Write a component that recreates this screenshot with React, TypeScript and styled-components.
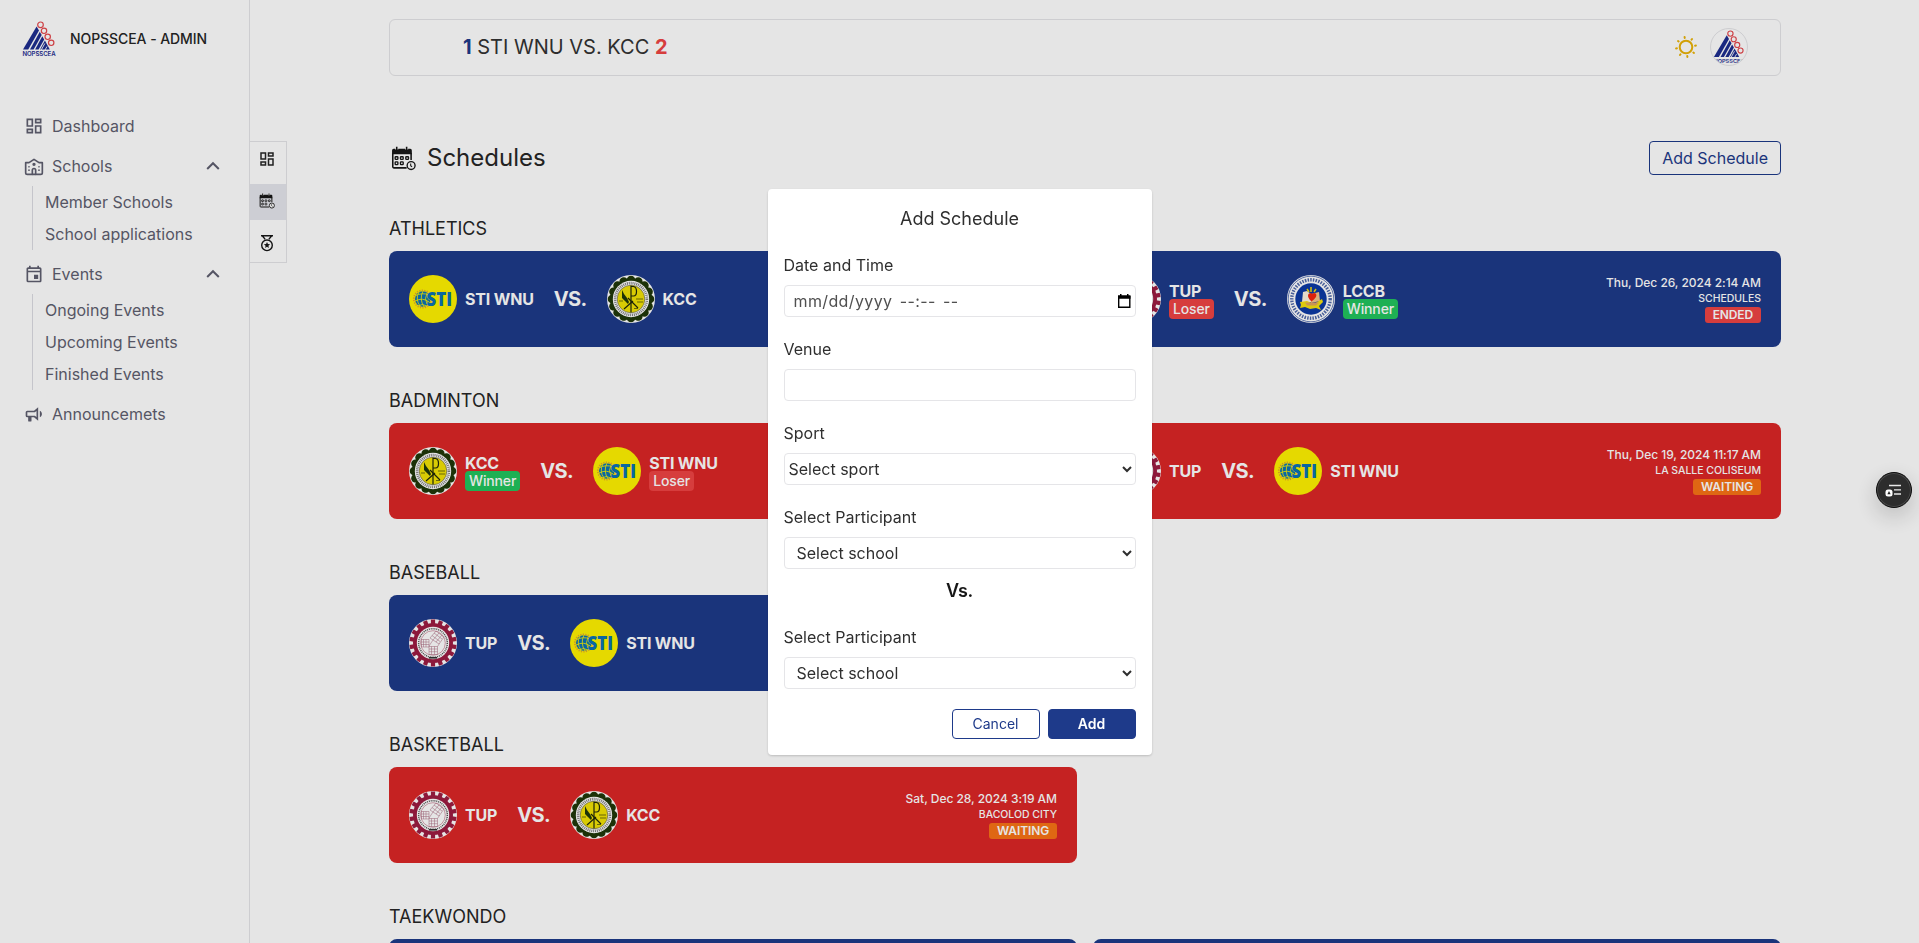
import React from "react";
import styled, { createGlobalStyle } from "styled-components";
import { MdOutlineDashboard, MdOutlineEvent } from "react-icons/md";

const GlobalStyle = createGlobalStyle`
  *, *::before, *::after { box-sizing: border-box; }
  body {
    margin: 0;
    overflow: hidden;
    background: #fff;
    color: #262626;
    font-family: Inter, "Liberation Sans", sans-serif;
    font-size: 16px;
    line-height: 24px;
    font-weight: 400;
  }
  button, input, select { font: inherit; letter-spacing: inherit; color: inherit; }
`;

const colors = {
  blue: "#1e3a8a",
  red: "#dc2626",
  line: "#e5e5e8",
  muted: "#5f5f70",
};

const Page = styled.div`
  display: flex;
  height: 943px;
  overflow: hidden;
`;

/* ---------- sidebar ---------- */

const Sidebar = styled.aside`
  flex: none;
  width: 250px;
  border-right: 1px solid ${colors.line};
  display: flex;
  flex-direction: column;
`;

const Brand = styled.div`
  display: flex;
  align-items: center;
  gap: 13px;
  height: 78px;
  margin-bottom: 28px;
  padding-left: 21px;
  font-size: 14px;
  font-weight: 500;
  letter-spacing: -0.07px;
`;

const NavRow = styled.div`
  display: flex;
  align-items: center;
  height: 40px;
  padding: 0 29px 0 24px;
  gap: 8px;
  color: ${colors.muted};

  svg { flex: none; }
`;

const NavLabel = styled.span`
  flex: 1;
`;

const NavGroup = styled.div`
  margin-bottom: 4px;
`;

const SubNav = styled.div`
  margin-left: 32px;
  padding-left: 12px;
  border-left: 1px solid #dcdce2;
`;

const SubItem = styled.div`
  height: 32px;
  line-height: 32px;
  color: ${colors.muted};
`;

/* ---------- rail ---------- */

const Rail = styled.nav`
  flex: none;
  align-self: flex-start;
  width: 37px;
  height: 122px;
  margin-top: 141px;
  border: 1px solid ${colors.line};
  border-left: 0;
  display: flex;
  flex-direction: column;
  justify-content: space-between;
`;

const RailItem = styled.div<{ $active?: boolean }>`
  height: 36px;
  display: flex;
  align-items: center;
  justify-content: center;
  padding: 0 2px 2px 0;
  background: ${(p) => (p.$active ? "#e5e6ec" : "transparent")};
`;

/* ---------- content ---------- */

const Main = styled.main`
  width: 1392px;
  margin-left: 102px;
  padding-top: 19px;
`;

const TopBar = styled.header`
  display: flex;
  align-items: center;
  height: 57px;
  padding: 0 32px 1px 73px;
  border: 1px solid ${colors.line};
  border-radius: 6px;
`;

const Score = styled.div`
  flex: 1;
  font-size: 20px;
  line-height: 28px;
  color: #333;
`;

const Points = styled.b<{ $tone: string }>`
  font-weight: 700;
  color: ${(p) => p.$tone};
`;

const Avatar = styled.div`
  display: flex;
  align-items: center;
  justify-content: center;
  width: 38px;
  height: 38px;
  margin-left: 12px;
  border: 1px solid ${colors.line};
  border-radius: 50%;
  overflow: hidden;

  svg { flex: none; }
`;

const TitleRow = styled.div`
  display: flex;
  align-items: center;
  height: 34px;
  margin: 65px 0 40px;
  padding-left: 2px;
`;

const Title = styled.h1`
  flex: 1;
  margin: 0 0 0 11px;
  font-size: 24px;
  line-height: 32px;
  font-weight: 400;
`;

const AddButton = styled.button`
  height: 34px;
  padding: 0 12px;
  border: 1px solid ${colors.blue};
  border-radius: 4px;
  background: transparent;
  color: ${colors.blue};
`;

const Section = styled.section`
  margin-bottom: 40px;
`;

const SectionTitle = styled.h2`
  margin: 0 0 8px;
  font-size: 18px;
  line-height: 28px;
  font-weight: 400;
`;

const Cards = styled.div`
  display: grid;
  grid-template-columns: 1fr 1fr;
  gap: 16px;
`;

const Card = styled.article<{ $color: string }>`
  display: flex;
  align-items: center;
  justify-content: space-between;
  height: 96px;
  padding: 0 20px;
  border-radius: 8px;
  background: ${(p) => p.$color};
  color: #fff;
`;

const Match = styled.div`
  display: flex;
  align-items: center;
  gap: 20px;
`;

const Versus = styled.span`
  font-size: 20px;
  line-height: 28px;
  font-weight: 700;
  letter-spacing: -0.6px;
`;

const TeamBox = styled.div`
  display: flex;
  align-items: center;
  gap: 8px;

  svg { flex: none; }
`;

const TeamText = styled.div`
  display: flex;
  flex-direction: column;
  align-items: flex-start;
  font-size: 16px;
  line-height: 24px;
  font-weight: 700;
  letter-spacing: -0.18px;
`;

const Outcome = styled.span<{ $win: boolean }>`
  height: 20px;
  margin-top: -4px;
  padding: 0 4px;
  border-radius: 4px;
  font-size: 14px;
  line-height: 20px;
  font-weight: 500;
  letter-spacing: -0.14px;
  background: ${(p) => (p.$win ? "#22c55e" : "#ef4444")};
`;

const Details = styled.div`
  display: flex;
  flex-direction: column;
  align-items: flex-end;
  font-size: 12px;
  line-height: 16px;
  font-weight: 500;
  letter-spacing: -0.04px;
`;

const Place = styled.span`
  font-size: 10.5px;
  line-height: 16px;
`;

const Status = styled.span<{ $ended: boolean }>`
  height: 16px;
  padding: 0 8px;
  border-radius: 3px;
  font-weight: 600;
  letter-spacing: -0.12px;
  background: ${(p) => (p.$ended ? "#ef4444" : "#f97316")};
`;

/* ---------- dialog ---------- */

const Backdrop = styled.div`
  position: fixed;
  inset: 0;
  display: flex;
  align-items: center;
  justify-content: center;
  background: rgba(0, 0, 0, 0.1);
`;

const Dialog = styled.form`
  display: flex;
  flex-direction: column;
  gap: 20px;
  width: 384px;
  height: 566px;
  margin-bottom: -1px;
  padding: 16px;
  border-radius: 4px;
  background: #fff;
  color: #2f2f2f;
  box-shadow: 0 1px 3px rgba(0, 0, 0, 0.12), 0 1px 2px rgba(0, 0, 0, 0.08);
`;

const DialogTitle = styled.h3`
  margin: 0;
  text-align: center;
  font-size: 18px;
  line-height: 28px;
  font-weight: 400;
`;

const Field = styled.label`
  display: flex;
  flex-direction: column;
  gap: 8px;
`;

const Input = styled.input`
  width: 100%;
  height: 32px;
  padding: 0 8px;
  border: 1px solid ${colors.line};
  border-radius: 4px;
  background: #fff;
  outline: none;
`;

const DateBox = styled.div`
  display: flex;
  align-items: center;
  height: 32px;
  padding: 0 4px 0 9px;
  border: 1px solid ${colors.line};
  border-radius: 4px;
`;

const DateInput = styled.input`
  flex: 1;
  min-width: 0;
  padding: 0;
  border: 0;
  outline: none;
  background: transparent;
  letter-spacing: 0.38px;
  word-spacing: 2.4px;

  &::placeholder { color: #505050; opacity: 1; }
`;

const Select = styled.select<{ $inset: number }>`
  width: 100%;
  height: 32px;
  padding: 0 0 0 ${(p) => p.$inset}px;
  border: 1px solid ${colors.line};
  border-radius: 4px;
  background: #fff;
  outline: none;
`;

const Between = styled.div`
  margin-top: -12px;
  text-align: center;
  font-size: 18px;
  line-height: 28px;
  font-weight: 600;
  letter-spacing: -0.3px;
  color: #171717;
`;

const Actions = styled.div`
  display: flex;
  justify-content: flex-end;
  gap: 8px;
`;

const ActionButton = styled.button<{ $primary?: boolean }>`
  width: 88px;
  height: 30px;
  padding: 0;
  border: 1px solid ${colors.blue};
  border-radius: 4px;
  font-size: 14px;
  line-height: 20px;
  background: ${(p) => (p.$primary ? colors.blue : "#fff")};
  color: ${(p) => (p.$primary ? "#fff" : colors.blue)};
  font-weight: ${(p) => (p.$primary ? 600 : 400)};
`;

const FloatingButton = styled.div`
  position: fixed;
  right: 7px;
  top: 472px;
  width: 36px;
  height: 36px;
  border-radius: 50%;
  border: 1px solid #0c0c0c;
  background: #2d2d2d;
  box-shadow: inset 0 0 0 1px #4a4a4a, 0 8px 24px rgba(0, 0, 0, 0.2);
`;

/* ---------- drawings ---------- */

const SchoolIcon = () => (
  <svg width="20" height="20" viewBox="0 0 24 24" fill="none" stroke="currentColor" strokeWidth="2" strokeLinecap="round" strokeLinejoin="round">
    <circle cx="12" cy="10" r="1" />
    <path d="M22 20V8h-4l-6-4-6 4H2v12a2 2 0 0 0 2 2h16a2 2 0 0 0 2-2Z" />
    <path d="M6 17v.01M6 13v.01M18 17v.01M18 13v.01M14 22v-5a2 2 0 0 0-4 0v5" />
  </svg>
);

const HornIcon = () => (
  <svg width="20" height="20" viewBox="0 0 24 24" fill="currentColor">
    <path d="M12 8H4a2 2 0 0 0-2 2v4a2 2 0 0 0 2 2h1v4a1 1 0 0 0 1 1h2a1 1 0 0 0 1-1v-4h3l5 4V4l-5 4m3 7.6L13 14H4v-4h9l2-1.6v7.2m6.500-3.600c0 1.710-.960 3.260-2.500 4V8c1.530.750 2.500 2.300 2.500 4Z" />
  </svg>
);

const ChevronUp = () => (
  <svg width="14" height="10" viewBox="0 0 14 10" fill="none" stroke="currentColor" strokeWidth="2">
    <path d="M1.200 8 7 2.200 12.800 8" />
  </svg>
);

const CalendarIcon = () => (
  <svg width="13" height="15" viewBox="0 0 13 15" fill="none" stroke="#000">
    <path d="M.7 2v11.300h11.100V2" strokeWidth="1.400" />
    <path d="M0 1.300h12.500v3.400H0ZM2 0h1.500v2H2ZM9 0h1.500v2H9Z" fill="#000" stroke="none" />
  </svg>
);

const ScheduleIcon = ({ size }: { size: number }) => (
  <svg width={size} height={size} viewBox="0 0 24 24" fill="none" stroke="#171717">
    <path d="M1.700 6.500V20a1 1 0 0 0 1 1H15M19.300 6.500V13.500" strokeWidth="1.500" />
    <path d="M1 8V4.200A1.500 1.500 0 0 1 2.500 2.700h16A1.500 1.500 0 0 1 20 4.200V8Z" fill="#171717" stroke="none" />
    <path d="M5.500.8v2.600M15 .8v2.600" stroke="#fff" strokeWidth="3" />
    <path d="M5.500.7v3.300M15 .7v3.300" strokeWidth="1.500" />
    <g strokeWidth="1.300">
      <rect x="4" y="10.300" width="2.600" height="2.600" rx=".6" />
      <rect x="9.100" y="10.300" width="2.600" height="2.600" rx=".6" />
      <rect x="14.200" y="10.300" width="2.600" height="2.600" rx=".6" />
      <rect x="4" y="15.300" width="2.600" height="2.600" rx=".6" />
      <rect x="9.100" y="15.300" width="2.600" height="2.600" rx=".6" />
    </g>
    <circle cx="19.300" cy="18.800" r="3.800" fill="#fff" strokeWidth="1.300" />
    <path d="M18.900 16.800v2.100l1.300 1.200" strokeWidth="1" />
  </svg>
);

const MedalIcon = () => (
  <svg width="16" height="18" viewBox="0 0 16 18" fill="none" stroke="#171717" strokeWidth="1.400">
    <path d="M2 1.800h12M3.500 2l2.700 3.400M12.500 2 9.800 5.400" />
    <circle cx="8" cy="11.300" r="5.300" />
    <path d="m8 8.100.9 2 2.200.2-1.700 1.500.5 2.200L8 12.800l-1.900 1.200.5-2.200-1.700-1.500 2.200-.2Z" fill="#171717" stroke="none" />
  </svg>
);

const SunIcon = () => (
  <svg width="24" height="24" viewBox="-12 -12 24 24" fill="none" stroke="#eab308" strokeWidth="2" strokeLinecap="round">
    <circle r="6.300" />
    {[0, 45, 90, 135, 180, 225, 270, 315].map((a) => (
      <path key={a} d="M0-9.200V-10" transform={`rotate(${a - 8})`} />
    ))}
  </svg>
);

const LeagueLogo = ({ size }: { size: number }) => (
  <svg width={size} height={size} viewBox="0 0 36 36">
    <g fill="#1e2d8f">
      <path d="M15.600 5.500 18 9.500 7.200 28.500H2Z" />
      <path d="m18.800 10.800 1.900 3.300L12.600 28.500H9Z" />
      <path d="m21.300 15.300 1.900 3.200-5.600 10h-3.500Z" />
      <path d="m23.900 19.600 4.900 8.900h-9.700Z" />
    </g>
    <path d="m23.800 22.500-3.600 6.500M26 25.500l-2 3.500" stroke="#fff" strokeWidth=".9" />
    <g fill="none" stroke="#e5484d" strokeWidth="1.200">
      <circle cx="19.500" cy="3.800" r="2.800" />
      <circle cx="23" cy="9.800" r="2.700" />
      <circle cx="26.700" cy="15.800" r="2.700" />
      <circle cx="30.200" cy="21.800" r="2.700" />
    </g>
    <text x="18" y="34.600" textAnchor="middle" textLength="33" lengthAdjust="spacingAndGlyphs" fontSize="5.800" fontWeight="600" fill="#1e2d8f">
      NOPSSCEA
    </text>
  </svg>
);

const StiLogo = () => (
  <svg width="48" height="48" viewBox="0 0 48 48">
    <circle cx="24" cy="24" r="24" fill="#fff200" />
    <circle cx="13.800" cy="24" r="7.800" fill="#0b72b5" />
    <g fill="none" stroke="#fff200" strokeWidth=".8">
      <path d="M6 21q7-4 14-1M6 26q8-4 14 1M9 31q4-3 9 0M10 17q-4 7 1 14M14 16q-4 8 1 16M18 18q-3 6 0 11" />
    </g>
    <circle cx="13.500" cy="24" r="8.700" fill="none" stroke="#d9923a" strokeWidth="1.700" strokeDasharray="1.200 1.300" opacity=".8" />
    <text x="17.500" y="31" textLength="25.500" lengthAdjust="spacingAndGlyphs" fontFamily="Open Sans" fontSize="18.500" fontWeight="800" fill="#0b72b5" stroke="#fff200" strokeWidth=".8" paintOrder="stroke">
      STI
    </text>
  </svg>
);

const petals = Array.from({ length: 16 }, (_, i) => i * 22.5);

const KccLogo = () => (
  <svg width="48" height="48" viewBox="-24 -24 48 48">
    <circle r="24" fill="#fff" />
    <g fill="#20380a">
      {petals.map((a) => (
        <circle key={a} cy="-19" r="4.300" transform={`rotate(${a})`} />
      ))}
      <circle r="20.500" />
    </g>
    <circle r="18.200" fill="#fff" />
    <circle r="15.900" fill="none" stroke="#555" strokeWidth="2.600" strokeDasharray="1 .9" opacity=".75" />
    <circle r="13.800" fill="#f2e205" stroke="#555" strokeWidth=".6" />
    <g fill="none" stroke="#20280a" strokeWidth="1.200">
      <path d="M0-13.500V13.500M0-12.500h2.500q3 .5 3 5t-3 4.500H0" />
      <path d="m-7 10 9-8M-3-1 7 9" />
      <path d="M5 0h7M6 3h6M3 9.500h4M-12 2h4" strokeWidth=".6" />
    </g>
    <path d="m-9-9 2 4 3 4 2 4-1 2-3-3-3-3Z" fill="#20380a" />
  </svg>
);

const teeth = Array.from({ length: 18 }, (_, i) => i * 20);

const TupLogo = () => (
  <svg width="48" height="48" viewBox="-24 -24 48 48">
    <circle r="24" fill="#fff" />
    <circle r="20" fill="#9d1c42" />
    <g fill="#9d1c42">
      {teeth.map((a) => (
        <rect key={a} x="-2.100" y="-23.500" width="4.200" height="6" transform={`rotate(${a})`} />
      ))}
    </g>
    <circle r="16.200" fill="#fff" />
    <circle r="14.300" fill="none" stroke="#333" strokeWidth="1.500" strokeDasharray="1 .9" opacity=".85" />
    <circle r="12.300" fill="#fff" stroke="#b04a66" strokeWidth=".5" />
    <g fill="none" stroke="#a8687f" strokeWidth=".5">
      <path d="M-12-3.500H-4V4h-7.500ZM-12-1h8M-12 1.500h8M-9.500-3.500V4M-7-3.500V4" />
      <path d="M-4 3.500h8.500v8H-4ZM-4 6h8.500M-4 8.700h8.500M-1.500 3.500v8M1.500 3.500v8" />
      <path d="m-3-5 6-7 8 6-5 7ZM-1-7.500l8 6M1-10l8 6M0-3l6-7M3-1l6-7M-4 3l4-6M4.500 3.500l2-3" />
    </g>
    <path d="M-4 14.800h8" stroke="#333" strokeWidth="1.600" />
  </svg>
);

const LccbLogo = () => (
  <svg width="48" height="48" viewBox="-24 -24 48 48">
    <circle r="24" fill="#fff" />
    <circle r="22.800" fill="none" stroke="#2a4a9e" strokeWidth=".7" />
    <circle r="19.200" fill="none" stroke="#33509c" strokeWidth="3.400" strokeDasharray="1.500 1.200" opacity=".85" />
    <circle r="15.700" fill="#0d3aa5" />
    <path d="M-8-7-4-8 0-5v8h-9Z" fill="#fff4e0" />
    <path d="M0-5 8-7l1 9-9 2Z" fill="#f2c48a" />
    <path d="M0-12v5M-4-10l2 3M5-10 3-7" stroke="#f4d90f" strokeWidth="1.500" />
    <path d="m-11 3 7-1 7 3 8-5 1 3-4 4 2 4-5-2-6 1-5-2-5 1 1-3Z" fill="#f4e00f" />
    <path d="M-6 3.500h14l-3 3h-9Z" fill="#e0a45e" />
    <path d="M.5 2.500C-3-1-3.500-3-2.500-5 0-7 1-5 1-5s3-2 4 0 0 4-4.500 7.500Z" fill="#f4260f" />
  </svg>
);

const PanelGlyph = () => (
  <svg width="34" height="34" viewBox="0 0 34 34" fill="none">
    <path d="M12 12.500h12M17 16.800h7M17 21h7" stroke="#e8e8e8" strokeWidth="1.300" />
    <rect x="8.500" y="16.500" width="7" height="7" rx="2.500" fill="#fff" />
    <path d="m12 18 1.600 3.300h-3.200Z" fill="#222" />
  </svg>
);

/* ---------- data ---------- */

const logos = { "STI WNU": StiLogo, KCC: KccLogo, TUP: TupLogo, LCCB: LccbLogo };

type TeamName = keyof typeof logos;
type Side = { name: TeamName; win?: boolean };
type Game = { home: Side; away: Side; date: string; place: string; status: string };
type Sport = { sport: string; color: string; games: Game[] };

const sports: Sport[] = [
  {
    sport: "ATHLETICS",
    color: colors.blue,
    games: [
      { home: { name: "STI WNU" }, away: { name: "KCC" }, date: "", place: "", status: "" },
      { home: { name: "TUP", win: false }, away: { name: "LCCB", win: true }, date: "Thu, Dec 26, 2024 2:14 AM", place: "SCHEDULES", status: "ENDED" },
    ],
  },
  {
    sport: "BADMINTON",
    color: colors.red,
    games: [
      { home: { name: "KCC", win: true }, away: { name: "STI WNU", win: false }, date: "", place: "", status: "" },
      { home: { name: "TUP" }, away: { name: "STI WNU" }, date: "Thu, Dec 19, 2024 11:17 AM", place: "LA SALLE COLISEUM", status: "WAITING" },
    ],
  },
  {
    sport: "BASEBALL",
    color: colors.blue,
    games: [{ home: { name: "TUP" }, away: { name: "STI WNU" }, date: "", place: "", status: "" }],
  },
  {
    sport: "BASKETBALL",
    color: colors.red,
    games: [{ home: { name: "TUP" }, away: { name: "KCC" }, date: "Sat, Dec 28, 2024 3:19 AM", place: "BACOLOD CITY", status: "WAITING" }],
  },
];

const Team = ({ side }: { side: Side }) => {
  const Logo = logos[side.name];
  return (
    <TeamBox>
      <Logo />
      <TeamText>
        {side.name}
        {side.win !== undefined && <Outcome $win={side.win}>{side.win ? "Winner" : "Loser"}</Outcome>}
      </TeamText>
    </TeamBox>
  );
};

const GameCard = ({ game, color }: { game: Game; color: string }) => (
  <Card $color={color}>
    <Match>
      <Team side={game.home} />
      <Versus>VS.</Versus>
      <Team side={game.away} />
    </Match>
    {game.date && (
      <Details>
        <span>{game.date}</span>
        <Place>{game.place}</Place>
        <Status $ended={game.status === "ENDED"}>{game.status}</Status>
      </Details>
    )}
  </Card>
);

const groups = [
  { label: "Schools", icon: <SchoolIcon />, items: ["Member Schools", "School applications"] },
  { label: "Events", icon: <MdOutlineEvent size={20} />, items: ["Ongoing Events", "Upcoming Events", "Finished Events"] },
];

export default function App() {
  return (
    <>
      <GlobalStyle />
      <Page>
        <Sidebar>
          <Brand>
            <LeagueLogo size={36} />
            NOPSSCEA - ADMIN
          </Brand>
          <NavRow>
            <MdOutlineDashboard size={20} />
            <NavLabel>Dashboard</NavLabel>
          </NavRow>
          {groups.map((g) => (
            <NavGroup key={g.label}>
              <NavRow>
                {g.icon}
                <NavLabel>{g.label}</NavLabel>
                <ChevronUp />
              </NavRow>
              <SubNav>
                {g.items.map((t) => (
                  <SubItem key={t}>{t}</SubItem>
                ))}
              </SubNav>
            </NavGroup>
          ))}
          <NavRow>
            <HornIcon />
            <NavLabel>Announcemets</NavLabel>
          </NavRow>
        </Sidebar>
        <Rail>
          <RailItem>
            <MdOutlineDashboard size={18} />
          </RailItem>
          <RailItem $active>
            <ScheduleIcon size={16} />
          </RailItem>
          <RailItem>
            <MedalIcon />
          </RailItem>
        </Rail>
        <Main>
          <TopBar>
            <Score>
              <Points $tone={colors.blue}>1</Points> STI WNU VS. KCC <Points $tone="#ef4444">2</Points>
            </Score>
            <SunIcon />
            <Avatar>
              <LeagueLogo size={34} />
            </Avatar>
          </TopBar>
          <TitleRow>
            <ScheduleIcon size={25} />
            <Title>Schedules</Title>
            <AddButton>Add Schedule</AddButton>
          </TitleRow>
          {sports.map((s) => (
            <Section key={s.sport}>
              <SectionTitle>{s.sport}</SectionTitle>
              <Cards>
                {s.games.map((g, i) => (
                  <GameCard key={i} game={g} color={s.color} />
                ))}
              </Cards>
            </Section>
          ))}
          <Section>
            <SectionTitle>TAEKWONDO</SectionTitle>
            <Cards>
              <Card $color={colors.blue} />
              <Card $color={colors.blue} />
            </Cards>
          </Section>
        </Main>
      </Page>
      <Backdrop>
        <Dialog>
          <DialogTitle>Add Schedule</DialogTitle>
          <Field>
            Date and Time
            <DateBox>
              <DateInput placeholder="mm/dd/yyyy --:-- --" />
              <CalendarIcon />
            </DateBox>
          </Field>
          <Field>
            Venue
            <Input type="text" />
          </Field>
          <Field>
            Sport
            <Select $inset={0}>
              <option>Select sport</option>
            </Select>
          </Field>
          <Field>
            Select Participant
            <Select $inset={8}>
              <option>Select school</option>
            </Select>
          </Field>
          <Between>Vs.</Between>
          <Field>
            Select Participant
            <Select $inset={8}>
              <option>Select school</option>
            </Select>
          </Field>
          <Actions>
            <ActionButton type="button">Cancel</ActionButton>
            <ActionButton type="button" $primary>
              Add
            </ActionButton>
          </Actions>
        </Dialog>
      </Backdrop>
      <FloatingButton>
        <PanelGlyph />
      </FloatingButton>
    </>
  );
}
